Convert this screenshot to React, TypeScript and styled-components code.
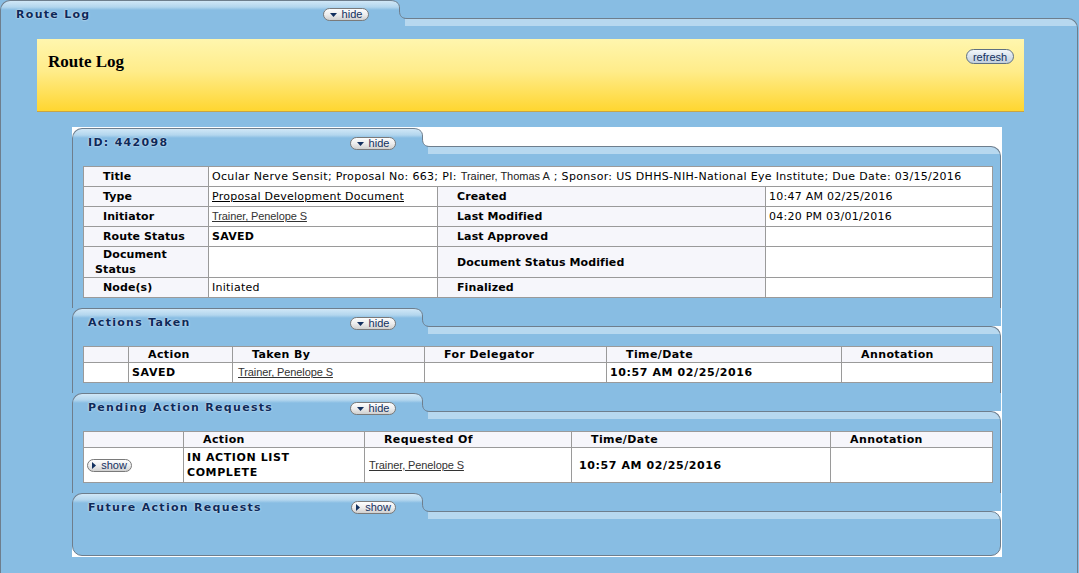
import React, { useId } from 'react';
import styled, { createGlobalStyle } from 'styled-components';

const BLUE = '#88bde3';
const LINE = '#6e7e8d';
const BAND = '#b7d8ef';
const GRID = '#9a9a9a';
const SHADE = '#f6f6fb';
const NAVY = '#12305f';

const GlobalStyle = createGlobalStyle`
  html, body {
    margin: 0;
    padding: 0;
    background: ${BLUE};
  }
  body {
    font-family: 'DejaVu Sans', Verdana, sans-serif;
    font-size: 11px;
    letter-spacing: 0.25px;
    color: #000;
  }
`;

type TabPanelProps = {
  title: string;
  width: number;
  padRight: number;
  btnTop: number;
  above: string;
  action: 'hide' | 'show';
  bodyPad: string;
  last?: boolean;
  grow?: boolean;
  children?: React.ReactNode;
};

const TabPanel = ({
  title,
  width,
  padRight,
  btnTop,
  above,
  action,
  bodyPad,
  last = false,
  grow = false,
  children,
}: TabPanelProps) => {
  const gradId = 'tabgrad' + useId().replace(/[^a-zA-Z0-9]/g, '');
  return (
    <PanelStyled $grow={grow}>
      <TabHeadStyled $above={above}>
        <TabLabelStyled $w={width - 20} $padR={padRight}>
          <TabTitleStyled>{title}</TabTitleStyled>
          <PillButton $w={action === 'hide' ? 46 : 45} $top={btnTop}>
            {action === 'hide' ? <ArrowDown /> : <ArrowRight />}
            <span>{action}</span>
          </PillButton>
        </TabLabelStyled>
        <CornerSvg width="20" height="19" viewBox="0 0 20 19">
          <defs>
            <linearGradient id={gradId} x1="0" y1="1" x2="0" y2="20" gradientUnits="userSpaceOnUse">
              <stop offset="0" stopColor="#d0e7f7" />
              <stop offset="0.32" stopColor="#b3d6ee" />
              <stop offset="0.47" stopColor={BLUE} />
            </linearGradient>
          </defs>
          <path d="M0 0.5H3C9 0.5 12.5 3 12.5 8V11C12.5 16 15 18.5 20 18.5V19H0Z" fill={`url(#${gradId})`} />
          <path d="M0 0.5H3C9 0.5 12.5 3 12.5 8V11C12.5 16 15 18.5 20 18.5" fill="none" stroke={LINE} />
        </CornerSvg>
      </TabHeadStyled>
      <TabBodyStyled $w={width} $last={last} $pad={bodyPad}>
        {children}
      </TabBodyStyled>
    </PanelStyled>
  );
};

const ArrowDown = () => (
  <svg width="7" height="4" viewBox="0 0 7 4">
    <path d="M0 0H7L3.5 4Z" fill={NAVY} />
  </svg>
);

const ArrowRight = () => (
  <svg width="4" height="7" viewBox="0 0 4 7">
    <path d="M0 0L4 3.5L0 7Z" fill={NAVY} />
  </svg>
);

const Person = ({ name }: { name: string }) => <PersonLinkStyled href="#">{name}</PersonLinkStyled>;

const App = () => {
  return (
    <>
      <GlobalStyle />
      <PageStyled>
        <TabPanel
          title="Route Log"
          width={407}
          padRight={18}
          btnTop={0}
          above="transparent"
          action="hide"
          bodyPad="20px 0 0 36px"
          grow
        >
          <BannerStyled>
            <BannerTitleStyled>Route Log</BannerTitleStyled>
            <RefreshButton>refresh</RefreshButton>
          </BannerStyled>
          <SheetStyled>
            <TabPanel
              title="ID: 442098"
              width={358}
              padRight={14}
              btnTop={1}
              above="transparent"
              action="hide"
              bodyPad="19px 0 10px 10px"
            >
              <GridTable>
                <colgroup>
                  <Col $w={125} />
                  <Col $w={229} />
                  <Col $w={328} />
                  <Col $w={227} />
                </colgroup>
                <tbody>
                  <tr>
                    <LabelCell>Title</LabelCell>
                    <ValueCell colSpan={3} $wide>
                      Ocular Nerve Sensit; Proposal No: 663; PI: <PlainName>Trainer, Thomas A</PlainName> ; Sponsor: US
                      DHHS-NIH-National Eye Institute; Due Date: 03/15/2016
                    </ValueCell>
                  </tr>
                  <tr>
                    <LabelCell>Type</LabelCell>
                    <ValueCell>
                      <DocLinkStyled href="#">Proposal Development Document</DocLinkStyled>
                    </ValueCell>
                    <LabelCell>Created</LabelCell>
                    <ValueCell>10:47 AM 02/25/2016</ValueCell>
                  </tr>
                  <tr>
                    <LabelCell>Initiator</LabelCell>
                    <ValueCell>
                      <Person name="Trainer, Penelope S" />
                    </ValueCell>
                    <LabelCell>Last Modified</LabelCell>
                    <ValueCell>04:20 PM 03/01/2016</ValueCell>
                  </tr>
                  <tr>
                    <LabelCell>Route Status</LabelCell>
                    <ValueCell $bold>SAVED</ValueCell>
                    <LabelCell>Last Approved</LabelCell>
                    <ValueCell />
                  </tr>
                  <tr>
                    <LabelCell>Document Status</LabelCell>
                    <ValueCell />
                    <LabelCell>Document Status Modified</LabelCell>
                    <ValueCell />
                  </tr>
                  <tr>
                    <LabelCell>Node(s)</LabelCell>
                    <ValueCell>Initiated</ValueCell>
                    <LabelCell>Finalized</LabelCell>
                    <ValueCell />
                  </tr>
                </tbody>
              </GridTable>
            </TabPanel>

            <TabPanel
              title="Actions Taken"
              width={358}
              padRight={14}
              btnTop={1}
              above={BLUE}
              action="hide"
              bodyPad="19px 0 10px 10px"
            >
              <GridTable>
                <colgroup>
                  <Col $w={45} />
                  <Col $w={104} />
                  <Col $w={192} />
                  <Col $w={182} />
                  <Col $w={235} />
                  <Col $w={151} />
                </colgroup>
                <thead>
                  <tr>
                    <HeadCell />
                    <HeadCell>Action</HeadCell>
                    <HeadCell>Taken By</HeadCell>
                    <HeadCell>For Delegator</HeadCell>
                    <HeadCell>Time/Date</HeadCell>
                    <HeadCell>Annotation</HeadCell>
                  </tr>
                </thead>
                <tbody>
                  <tr>
                    <RowCell />
                    <RowCell $bold>SAVED</RowCell>
                    <RowCell $indent={5}>
                      <Person name="Trainer, Penelope S" />
                    </RowCell>
                    <RowCell />
                    <RowCell $bold>10:57 AM 02/25/2016</RowCell>
                    <RowCell />
                  </tr>
                </tbody>
              </GridTable>
            </TabPanel>

            <TabPanel
              title="Pending Action Requests"
              width={358}
              padRight={14}
              btnTop={1}
              above={BLUE}
              action="hide"
              bodyPad="19px 0 10px 10px"
            >
              <GridTable>
                <colgroup>
                  <Col $w={100} />
                  <Col $w={181} />
                  <Col $w={207} />
                  <Col $w={259} />
                  <Col $w={162} />
                </colgroup>
                <thead>
                  <tr>
                    <HeadCell />
                    <HeadCell>Action</HeadCell>
                    <HeadCell>Requested Of</HeadCell>
                    <HeadCell>Time/Date</HeadCell>
                    <HeadCell>Annotation</HeadCell>
                  </tr>
                </thead>
                <tbody>
                  <tr>
                    <RowCell>
                      <PillButton $w={45} $top={0}>
                        <ArrowRight />
                        <span>show</span>
                      </PillButton>
                    </RowCell>
                    <RowCell $bold>
                      IN ACTION LIST
                      <br />
                      COMPLETE
                    </RowCell>
                    <RowCell $indent={4}>
                      <Person name="Trainer, Penelope S" />
                    </RowCell>
                    <RowCell $bold $indent={7}>
                      10:57 AM 02/25/2016
                    </RowCell>
                    <RowCell />
                  </tr>
                </tbody>
              </GridTable>
            </TabPanel>

            <TabPanel
              title="Future Action Requests"
              width={358}
              padRight={14}
              btnTop={0}
              above={BLUE}
              action="show"
              bodyPad="43px 0 0 0"
              last
            />
          </SheetStyled>
        </TabPanel>
      </PageStyled>
    </>
  );
};

const PageStyled = styled.div`
  width: 1078px;
  min-height: 573px;
  display: flex;
  flex-direction: column;
`;

const PanelStyled = styled.section<{ $grow: boolean }>`
  display: flex;
  flex-direction: column;
  ${({ $grow }) => ($grow ? 'flex: 1;' : '')}
`;

const TabHeadStyled = styled.div<{ $above: string }>`
  display: flex;
  height: 18px;
  position: relative;
  z-index: 1;
  background: ${({ $above }) => $above};
`;

const TabLabelStyled = styled.div<{ $w: number; $padR: number }>`
  flex: 0 0 ${({ $w }) => $w}px;
  height: 19px;
  box-sizing: border-box;
  border-top: 1px solid ${LINE};
  border-left: 1px solid ${LINE};
  border-top-left-radius: 10px;
  background: linear-gradient(#d0e7f7 0, #b3d6ee 6px, ${BLUE} 9px);
  display: flex;
  justify-content: space-between;
  align-items: flex-start;
  padding: 7px ${({ $padR }) => $padR}px 0 15px;
`;

const CornerSvg = styled.svg`
  display: block;
  flex-shrink: 0;
  overflow: visible;
`;

const TabTitleStyled = styled.h2`
  margin: 0;
  font: bold 11px/13px 'DejaVu Sans', Verdana, sans-serif;
  letter-spacing: 1.3px;
  color: #0d2a5a;
  white-space: nowrap;
  text-shadow: 0 0 2px rgba(255, 255, 255, 0.9);
`;

const TabBodyStyled = styled.div<{ $w: number; $last: boolean; $pad: string }>`
  flex: 1;
  border: 1px solid ${LINE};
  border-bottom: ${({ $last }) => ($last ? `1px solid ${LINE}` : 'none')};
  border-radius: ${({ $last }) => ($last ? '0 10px 10px 10px' : '0 10px 0 0')};
  background:
    linear-gradient(${BAND}, ${BAND}) no-repeat right top / calc(100% - ${({ $w }) => $w - 3}px) 7px,
    ${BLUE};
  padding: ${({ $pad }) => $pad};
`;

const PillButton = styled.button<{ $w: number; $top: number }>`
  box-sizing: border-box;
  width: ${({ $w }) => $w}px;
  height: 13px;
  margin-top: ${({ $top }) => $top}px;
  padding: 0;
  display: inline-flex;
  align-items: center;
  justify-content: center;
  gap: 5px;
  flex-shrink: 0;
  border: 1px solid #7a7a7a;
  border-radius: 7px;
  background: linear-gradient(#fdfdfd, #ededed 50%, #d0d0d0);
  font: 11px/11px 'Liberation Sans', Arial, sans-serif;
  letter-spacing: 0;
  color: ${NAVY};
  cursor: pointer;

  svg {
    display: block;
  }
`;

const BannerStyled = styled.header`
  width: 987px;
  height: 73px;
  box-sizing: border-box;
  background: linear-gradient(#fff6ae 0%, #ffec8a 45%, #ffd630 100%);
  border-bottom: 1px solid #c8a446;
  display: flex;
  justify-content: space-between;
  align-items: flex-start;
  padding: 10px 10px 0 11px;
`;

const BannerTitleStyled = styled.h1`
  margin: 3px 0 0;
  font: bold 17px/20px 'Liberation Serif', 'Times New Roman', serif;
  letter-spacing: 0;
  color: #000;
`;

const RefreshButton = styled.button`
  box-sizing: border-box;
  width: 48px;
  height: 15px;
  padding: 0;
  border: 1px solid #5f7081;
  border-radius: 8px;
  background: linear-gradient(#f2f6fa, #d6e0ea 55%, #c2cfdc);
  font: 11px/12px 'Liberation Sans', Arial, sans-serif;
  letter-spacing: 0;
  color: ${NAVY};
  cursor: pointer;
`;

const SheetStyled = styled.div`
  width: 930px;
  box-sizing: border-box;
  margin: 15px 0 0 35px;
  padding: 1px 1px 1px 0;
  background: #ffffff;
`;

const GridTable = styled.table`
  width: 909px;
  table-layout: fixed;
  border-collapse: collapse;
  background: #ffffff;
`;

const Col = styled.col<{ $w: number }>`
  width: ${({ $w }) => $w}px;
`;

const LabelCell = styled.th`
  height: 19px;
  padding: 0 3px 0 11px;
  border: 1px solid ${GRID};
  background: ${SHADE};
  font-weight: bold;
  letter-spacing: 0.1px;
  text-align: left;
  text-indent: 8px;
  line-height: 15px;
  vertical-align: middle;
`;

const ValueCell = styled.td<{ $bold?: boolean; $wide?: boolean }>`
  height: 19px;
  padding: 0 3px;
  border: 1px solid ${GRID};
  font-weight: ${({ $bold }) => ($bold ? 'bold' : 'normal')};
  letter-spacing: ${({ $wide }) => ($wide ? '0.33px' : '0.25px')};
  line-height: 15px;
  vertical-align: middle;
  white-space: normal;
`;

const HeadCell = styled.th`
  height: 15px;
  padding: 0 3px 0 11px;
  border: 1px solid ${GRID};
  background: ${SHADE};
  font-weight: bold;
  letter-spacing: 0.4px;
  text-align: left;
  text-indent: 8px;
  line-height: 15px;
`;

const RowCell = styled.td<{ $bold?: boolean; $indent?: number }>`
  padding: 2px 3px 2px ${({ $indent }) => $indent ?? 3}px;
  border: 1px solid ${GRID};
  font-weight: ${({ $bold }) => ($bold ? 'bold' : 'normal')};
  letter-spacing: ${({ $bold }) => ($bold ? '0.6px' : '0.25px')};
  line-height: 15px;
  vertical-align: middle;
`;

const PlainName = styled.span`
  font: 11px 'Liberation Sans', Arial, sans-serif;
  letter-spacing: 0;
  color: #222;
`;

const DocLinkStyled = styled.a`
  color: #000;
  text-decoration: underline;
`;

const PersonLinkStyled = styled.a`
  font: 11px 'Liberation Sans', Arial, sans-serif;
  letter-spacing: -0.1px;
  color: #333;
  text-decoration: underline;
`;

export default App;
